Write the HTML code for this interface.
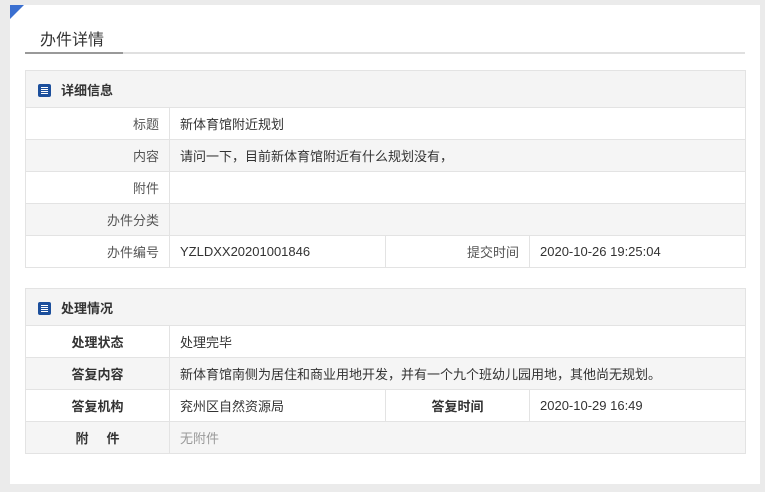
<!DOCTYPE html><html><head><meta charset="utf-8"><style>
body{margin:0;width:765px;height:492px;background:#ebebeb;font-family:"Liberation Sans","Noto Sans CJK SC",sans-serif;font-size:13px;color:#333;position:relative;overflow:hidden}
.panel{position:absolute;left:10px;top:5px;width:750px;height:479px;background:#fff}
.corner{position:absolute;left:10px;top:5px;width:0;height:0;border-top:14px solid #3a6fd0;border-right:14px solid transparent}
.tt{position:absolute;left:40px;top:26px;font-size:16px;color:#333}
.ul{position:absolute;left:25px;top:52px;width:720px;height:2px;background:#e0e0e0}
.ul2{position:absolute;left:25px;top:52px;width:98px;height:2px;background:#999}
table{position:absolute;left:25px;width:721px;border-collapse:collapse}
td{border:1px solid #e3e3e3;height:32px;padding:0 10px;box-sizing:border-box}
.h td{background:#f4f4f4;height:37px;font-weight:bold;padding-left:12px}
.g td{background:#f5f5f5}
.l{width:144px;text-align:right;color:#555}
.b .l{text-align:center;font-weight:bold;color:#333}
.ic{display:inline-block;width:13px;height:13px;background:#1c4f9c;border-radius:2px;vertical-align:-2px;margin-right:10px;position:relative}
.ic:after{content:"";position:absolute;left:3px;top:3px;width:7px;height:1px;background:#fff;box-shadow:0 2px #fff,0 4px #fff,0 6px #fff}
</style></head><body>
<div class="panel"></div><div class="corner"></div>
<div class="tt">办件详情</div><div class="ul"></div><div class="ul2"></div>
<table style="top:70px">
<tr class="h"><td colspan="4"><span class="ic"></span>详细信息</td></tr>
<tr><td class="l">标题</td><td colspan="3">新体育馆附近规划</td></tr>
<tr class="g"><td class="l">内容</td><td colspan="3">请问一下，目前新体育馆附近有什么规划没有，</td></tr>
<tr><td class="l">附件</td><td colspan="3"></td></tr>
<tr class="g"><td class="l">办件分类</td><td colspan="3"></td></tr>
<tr><td class="l">办件编号</td><td style="width:216px">YZLDXX20201001846</td><td class="l" style="width:144px">提交时间</td><td>2020-10-26 19:25:04</td></tr>
</table>
<table style="top:288px" class="b">
<tr class="h"><td colspan="4"><span class="ic"></span>处理情况</td></tr>
<tr><td class="l">处理状态</td><td colspan="3">处理完毕</td></tr>
<tr class="g"><td class="l">答复内容</td><td colspan="3">新体育馆南侧为居住和商业用地开发，并有一个九个班幼儿园用地，其他尚无规划。</td></tr>
<tr><td class="l">答复机构</td><td style="width:216px">兖州区自然资源局</td><td class="l" style="width:144px">答复时间</td><td>2020-10-29 16:49</td></tr>
<tr class="g"><td class="l">附&nbsp;&nbsp;&nbsp;&nbsp;&nbsp;件</td><td colspan="3" style="color:#999">无附件</td></tr>
</table>
</body></html>
